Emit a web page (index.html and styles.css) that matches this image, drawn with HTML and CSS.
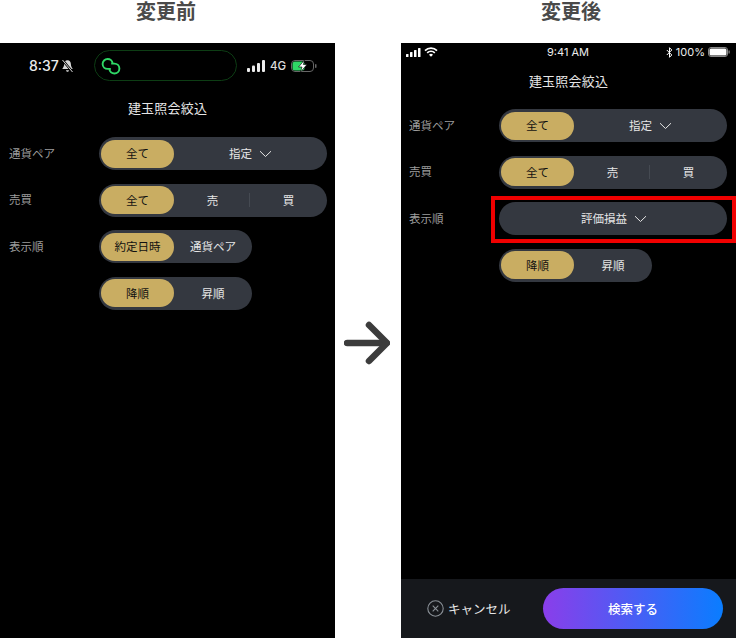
FILE: index.html
```html
<!DOCTYPE html>
<html lang="ja">
	<head>
		<meta charset="utf-8" />
		<title>建玉照会絞込</title>
		<link rel="stylesheet" href="styles.css">
	</head>
	<body>
		<div class="compare">
			<section class="side">
				<h2 class="sideTitle titleBefore">変更前</h2>
				<div class="phone">
					<div class="statusOld">
						<span class="oldTime">8:37</span>
						<svg class="bell" width="13" height="14" viewBox="0 0 13 14"><path d="M6.5 1.2c-2.3 0-3.4 1.8-3.4 4 0 2.400-1.100 3.600-2 4.800h10.800c-.9-1.200-2-2.400-2-4.800 0-2.200-1.100-4-3.400-4z" fill="#d8d8d8"/><path d="M5 11.200c.3 1 .9 1.500 1.500 1.500s1.200-.5 1.500-1.500z" fill="#d8d8d8"/><path d="M1.500 1l10 12" stroke="#000" stroke-width="2.400"/><path d="M1.500 1l10 12" stroke="#d8d8d8" stroke-width="1"/></svg>
						<div class="island">
							<svg width="20" height="20" viewBox="0 0 20 20" fill="none" stroke="#2fd866" stroke-width="1.900"><path d="M9.800 12.900H6.600a5 5 0 0 1-5-4.900 5 5 0 0 1 5-5c2.600 0 4.800 1.900 5 4.300"/><path d="M10.200 7.600h3.200a5 5 0 0 1 5 4.900 5 5 0 0 1-5 5c-2.600 0-4.800-1.900-5-4.300"/></svg>
						</div>
						<svg class="signal" width="18" height="12" viewBox="0 0 18 12" fill="#ececec"><rect x="0" y="8" width="3" height="4" rx="1"/><rect x="5" y="5.500" width="3" height="6.500" rx="1"/><rect x="10" y="3" width="3" height="9" rx="1"/><rect x="15" y="0" width="3" height="12" rx="1"/></svg>
						<span class="oldNet">4G</span>
						<svg class="oldBattery" width="26" height="12" viewBox="0 0 26 12"><rect x=".5" y=".5" width="22" height="11" rx="3.500" fill="none" stroke="#666"/><rect x="1.500" y="1.500" width="12" height="9" rx="2.500" fill="#2fd866"/><rect x="24" y="4" width="1.500" height="4" rx=".7" fill="#666"/><path d="M13.500 0l-6 7h3.500l-1.500 5 6.500-7.500h-3.700z" fill="#fff" stroke="#000" stroke-width=".6"/></svg>
					</div>
					<h1 class="screenTitle titleOld">建玉照会絞込</h1>
					<div class="form">
						<div class="row">
							<span class="rowLabel">通貨ペア</span>
							<div class="pill">
								<span class="seg on">全て</span>
								<span class="seg">指定<svg class="chev" width="13" height="8" viewBox="0 0 13 8"><path d="M1 1.200l5.500 5.300 5.500-5.300" fill="none" stroke="#e6e6e6" stroke-width="1"/></svg></span>
							</div>
						</div>
						<div class="row">
							<span class="rowLabel">売買</span>
							<div class="pill">
								<span class="seg on">全て</span>
								<span class="seg">売</span>
								<i class="divider"></i>
								<span class="seg">買</span>
							</div>
						</div>
						<div class="row">
							<span class="rowLabel">表示順</span>
							<div class="pill short">
								<span class="seg on">約定日時</span>
								<span class="seg">通貨ペア</span>
							</div>
						</div>
						<div class="row">
							<span class="rowLabel"></span>
							<div class="pill short">
								<span class="seg on">降順</span>
								<span class="seg">昇順</span>
							</div>
						</div>
					</div>
				</div>
			</section>
			<div class="arrowCol">
				<svg width="46" height="44" viewBox="0 0 46 44" fill="none" stroke="#3c3c3c" stroke-width="6.500" stroke-linecap="round" stroke-linejoin="round"><path d="M3 22h39"/><path d="M25 4l18 18-18 18"/></svg>
			</div>
			<section class="side">
				<h2 class="sideTitle titleAfter">変更後</h2>
				<div class="phone phoneNew">
					<div class="statusNew">
						<div class="statusPart">
							<svg width="15" height="9" viewBox="0 0 15 9" fill="#fff"><rect x="0" y="6" width="2.500" height="3" rx=".6"/><rect x="4" y="4" width="2.500" height="5" rx=".6"/><rect x="8" y="2" width="2.500" height="7" rx=".6"/><rect x="12" y="0" width="2.500" height="9" rx=".6"/></svg>
							<svg width="14" height="10" viewBox="0 0 14 10" fill="none" stroke="#fff" stroke-width="1.700"><path d="M1 3.600a8.500 8.500 0 0 1 12 0"/><path d="M3.200 5.800a5.400 5.400 0 0 1 7.600 0"/><path d="M7 9.800l-2-2.100a2.900 2.900 0 0 1 4 0z" fill="#fff" stroke="none"/></svg>
						</div>
						<span class="newTime">9:41 AM</span>
						<div class="statusPart statusRight">
							<svg width="7" height="11" viewBox="0 0 7 11" fill="none" stroke="#fff" stroke-width="1"><path d="M.8 3l5 5-2.300 2.300V.7L5.800 3l-5 5"/></svg>
							<span class="percent">100%</span>
							<svg width="22" height="10" viewBox="0 0 22 10"><rect x=".5" y=".5" width="19" height="9" rx="2.500" fill="none" stroke="#888"/><rect x="1.500" y="1.500" width="17" height="7" rx="1.500" fill="#fff"/><rect x="20.500" y="3.500" width="1.200" height="3" fill="#888"/></svg>
						</div>
					</div>
					<h1 class="screenTitle titleNew">建玉照会絞込</h1>
					<div class="form">
						<div class="row">
							<span class="rowLabel">通貨ペア</span>
							<div class="pill">
								<span class="seg on">全て</span>
								<span class="seg">指定<svg class="chev" width="13" height="8" viewBox="0 0 13 8"><path d="M1 1.200l5.500 5.300 5.500-5.300" fill="none" stroke="#e6e6e6" stroke-width="1"/></svg></span>
							</div>
						</div>
						<div class="row">
							<span class="rowLabel">売買</span>
							<div class="pill">
								<span class="seg on">全て</span>
								<span class="seg">売</span>
								<i class="divider"></i>
								<span class="seg">買</span>
							</div>
						</div>
						<div class="row">
							<span class="rowLabel">表示順</span>
							<div class="pill marked">
								<span class="seg">評価損益<svg class="chev" width="13" height="8" viewBox="0 0 13 8"><path d="M1 1.200l5.500 5.300 5.500-5.300" fill="none" stroke="#e6e6e6" stroke-width="1"/></svg></span>
								<div class="redBox"></div>
							</div>
						</div>
						<div class="row">
							<span class="rowLabel"></span>
							<div class="pill short">
								<span class="seg on">降順</span>
								<span class="seg">昇順</span>
							</div>
						</div>
					</div>
					<div class="footer">
						<div class="cancel">
							<svg width="17" height="17" viewBox="0 0 17 17" fill="none" stroke="#8a9097" stroke-width="1.100"><circle cx="8.500" cy="8.500" r="7.700"/><path d="M5.700 5.700l5.600 5.600M11.300 5.700l-5.600 5.600"/></svg>
							<span>キャンセル</span>
						</div>
						<button class="search">検索する</button>
					</div>
				</div>
			</section>
		</div>
	</body>
</html>
```

FILE: styles.css
```css
body {
	margin: 0px;
	background: #fff;
	font-family: "Noto Sans CJK JP", "Liberation Sans", sans-serif;
}
.compare {
	display: flex;
	width: 736px;
	height: 638px;
}
.side {
	display: flex;
	flex-direction: column;
	width: 335px;
}
.arrowCol {
	width: 66px;
	padding: 321px 0 0 9px;
	box-sizing: border-box;
}
.sideTitle {
	margin: 0;
	height: 43px;
	padding-bottom: 21px;
	box-sizing: border-box;
	display: flex;
	align-items: center;
	justify-content: center;
	font-size: 20px;
	line-height: 22px;
	font-weight: 700;
	color: #4a4a4a;
	letter-spacing: 0;
}
.titleBefore {
	padding-right: 3px;
}
.titleAfter {
	padding-left: 5px;
}
.phone {
	flex: 1;
	display: flex;
	flex-direction: column;
	background: #000;
	color: #e6e6e6;
	--label-pad: 9px;
	--label-w: 90px;
}
.phoneNew {
	--label-pad: 8px;
}
.statusOld {
	display: flex;
	align-items: center;
	height: 31px;
	margin-top: 7px;
	padding-left: 29px;
}
.oldTime {
	font-family: Inter, "Liberation Sans", sans-serif;
	font-size: 14px;
	font-weight: 500;
	color: #ececec;
	width: 30px;
}
.bell {
	margin-left: 2px;
}
.island {
	width: 143px;
	height: 31px;
	box-sizing: border-box;
	margin-left: 20px;
	padding-left: 6px;
	border: 1px solid #0d3d14;
	border-radius: 16px;
	display: flex;
	align-items: center;
}
.signal {
	margin-left: 10px;
}
.oldNet {
	font-family: Inter, "Liberation Sans", sans-serif;
	font-size: 11.500px;
	font-weight: 500;
	color: #dcdcdc;
	margin-left: 5px;
}
.oldBattery {
	margin-left: 5px;
}
.statusNew {
	display: grid;
	grid-template-columns: 1fr auto 1fr;
	align-items: center;
	height: 18px;
	padding: 0 6px 0 5px;
}
.statusPart {
	display: flex;
	align-items: center;
	gap: 3px;
}
.statusRight {
	justify-content: flex-end;
}
.newTime,
.percent {
	font-family: Inter, "Liberation Sans", sans-serif;
	font-size: 11px;
	color: #ececec;
}
.screenTitle {
	margin: 0;
	font-size: 13px;
	line-height: 20px;
	font-weight: 400;
	text-align: center;
	color: #e6e6e6;
	letter-spacing: .2px;
}
.titleOld {
	padding: 17px 0 19px;
}
.titleNew {
	padding: 10px 0 18px;
}
.form {
	display: flex;
	flex-direction: column;
	gap: 13.500px;
	padding-left: var(--label-pad);
}
.row {
	display: flex;
	align-items: center;
}
.rowLabel {
	width: var(--label-w);
	padding-bottom: 2px;
	font-size: 11.500px;
	color: #9c9c9c;
}
.pill {
	position: relative;
	display: flex;
	align-items: center;
	width: 228px;
	height: 33px;
	padding: 2px;
	box-sizing: border-box;
	border-radius: 17px;
	background: #343840;
}
.pill.short {
	width: 153px;
}
.seg {
	flex: 1;
	display: flex;
	align-items: center;
	justify-content: center;
	gap: 7px;
	height: 28px;
	padding: 0 0 1px 2px;
	box-sizing: border-box;
	font-size: 11.500px;
	color: #e6e6e6;
}
.seg.on {
	flex: 0 0 73px;
	padding: 0 0 1px;
	border-radius: 14px;
	background: #c9ad62;
	color: #111;
}
.seg .chev {
	margin-top: 2px;
}
.divider {
	width: 1px;
	height: 14px;
	background: #454a52;
}
.redBox {
	position: absolute;
	left: -8px;
	right: -9px;
	top: -6px;
	bottom: -8px;
	border: 4px solid #f00000;
}
.footer {
	margin-top: auto;
	height: 59px;
	box-sizing: border-box;
	display: flex;
	align-items: center;
	padding: 0 13px 0 26px;
	background: #16181c;
}
.cancel {
	display: flex;
	align-items: center;
	gap: 4px;
	font-size: 12.500px;
	color: #e6e6e6;
}
.search {
	margin-left: auto;
	width: 180px;
	height: 41px;
	border: 0;
	border-radius: 21px;
	background: linear-gradient(90deg, #8a3eea, #0a7dff);
	color: #fff;
	font-family: inherit;
	font-size: 12.500px;
	font-weight: 500;
}
```
